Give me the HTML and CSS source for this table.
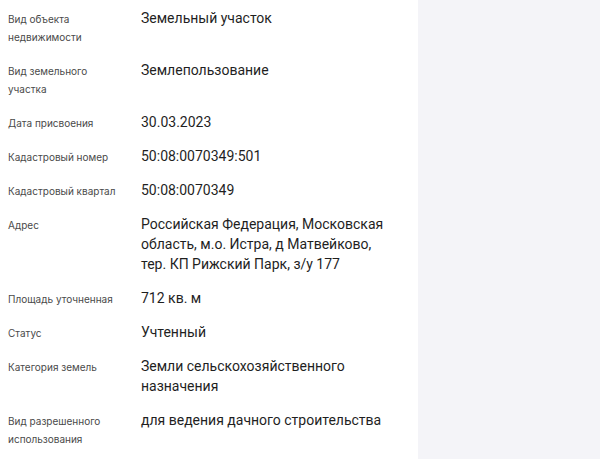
FILE: index.html
```html
<!DOCTYPE html>
<html lang="ru">
<head>
<meta charset="utf-8">
<link rel="stylesheet" href="styles.css">
</head>
<body>
<div class="page">
  <div class="panel">
    <dl class="props">
      <dt>Вид объекта недвижимости</dt><dd>Земельный участок</dd>
      <dt>Вид земельного участка</dt><dd>Землепользование</dd>
      <dt>Дата присвоения</dt><dd>30.03.2023</dd>
      <dt>Кадастровый номер</dt><dd>50:08:0070349:501</dd>
      <dt>Кадастровый квартал</dt><dd>50:08:0070349</dd>
      <dt>Адрес</dt><dd>Российская Федерация, Московская область, м.о. Истра, д Матвейково, тер. КП Рижский Парк, з/у 177</dd>
      <dt>Площадь уточненная</dt><dd>712 кв. м</dd>
      <dt>Статус</dt><dd>Учтенный</dd>
      <dt>Категория земель</dt><dd>Земли сельскохозяйственного назначения</dd>
      <dt>Вид разрешенного использования</dt><dd>для ведения дачного строительства</dd>
    </dl>
  </div>
  <div class="side"></div>
</div>
</body>
</html>
```

FILE: styles.css
```css
html, body {
  margin: 0;
  padding: 0;
  background: #ffffff;
}
.page {
  display: flex;
  width: 600px;
  height: 459px;
  overflow: hidden;
  font-family: Inter, "Noto Sans", sans-serif;
}
.panel {
  width: 418px;
  flex: none;
  background: #ffffff;
  padding: 8px 16px 0 8px;
  box-sizing: border-box;
}
.side {
  flex: 1;
  background: #f4f4f8;
}
.props {
  margin: 0;
  display: grid;
  grid-template-columns: 120px 250px;
  column-gap: 13px;
  row-gap: 14px;
}
.props dt {
  margin: 0;
  font-size: 10px;
  line-height: 18px;
  color: #4a4a4a;
  padding-top: 2px;
}
.props dd {
  margin: 0;
  font-family: Roboto, Inter, sans-serif;
  font-size: 14px;
  line-height: 20px;
  color: #1f1f1f;
}
```
